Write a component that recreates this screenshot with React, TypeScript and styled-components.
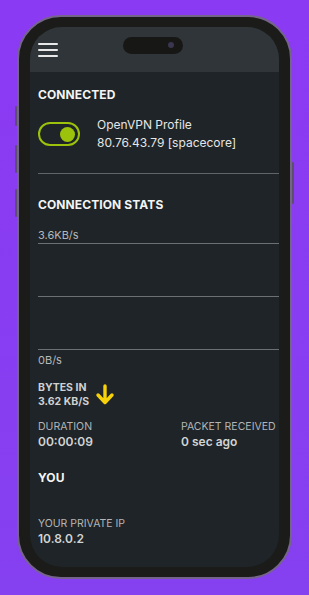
import React from 'react';
import styled, { createGlobalStyle } from 'styled-components';

const GlobalStyle = createGlobalStyle`
  html, body {
    margin: 0;
    padding: 0;
    background: #8a3cf2;
  }
  body {
    font-family: Inter, "Noto Sans", Arial, sans-serif;
    -webkit-font-smoothing: antialiased;
  }
`;

const Page = styled.div`
  width: 309px;
  height: 595px;
  display: flex;
  justify-content: center;
  align-items: flex-start;
  padding-top: 15px;
  box-sizing: border-box;
  background: linear-gradient(180deg, #8b3af3 0%, #8540f0 100%);
  overflow: hidden;
`;

const Phone = styled.div`
  position: relative;
  width: 275px;
  height: 564px;
  box-sizing: border-box;
  border: 2px solid #74648a;
  border-radius: 44px;
  background: #1b1b19;
  padding: 10px 11px;
`;

const SideButton = styled.div<{ $side: 'left' | 'right'; $top: number; $height: number }>`
  position: absolute;
  ${(p) => (p.$side === 'left' ? 'left: -4px;' : 'right: -4px;')}
  top: ${(p) => p.$top}px;
  width: 2px;
  height: ${(p) => p.$height}px;
  background: #5c4f6e;
  border-radius: 1px;
`;

const Screen = styled.div`
  position: relative;
  width: 100%;
  height: 100%;
  border-radius: 32px;
  overflow: hidden;
  background: #1e2427;
  display: flex;
  flex-direction: column;
`;

const Island = styled.div`
  position: absolute;
  top: 10px;
  left: 93px;
  width: 60px;
  height: 17px;
  border-radius: 9px;
  background: #171716;
  &::after {
    content: '';
    position: absolute;
    right: 9px;
    top: 5px;
    width: 6px;
    height: 6px;
    border-radius: 50%;
    background: #3b3550;
  }
`;

const Header = styled.div`
  height: 45px;
  flex-shrink: 0;
  background: #2f3538;
  display: flex;
  align-items: center;
  padding-left: 8px;
  padding-top: 1px;
  box-sizing: border-box;
`;

const Burger = styled.div`
  width: 20px;
  display: flex;
  flex-direction: column;
  gap: 4px;
  span {
    display: block;
    height: 2px;
    background: #e8e8e8;
    border-radius: 1px;
  }
`;

const Content = styled.div`
  flex: 1;
  padding-left: 8px;
  display: flex;
  flex-direction: column;
`;

const Heading = styled.div<{ $mt: number }>`
  margin-top: ${(p) => p.$mt}px;
  font-size: 12px;
  line-height: 15px;
  font-weight: 700;
  color: #f4f4f4;
  letter-spacing: 0.1px;
`;

const ProfileRow = styled.div`
  display: flex;
  align-items: center;
  gap: 17px;
  margin-top: 14px;
`;

const Toggle = styled.div`
  width: 42px;
  height: 24px;
  box-sizing: border-box;
  border: 2.5px solid #9cc20c;
  border-radius: 12px;
  display: flex;
  align-items: center;
  justify-content: flex-end;
  padding-right: 3px;
  flex-shrink: 0;
  &::after {
    content: '';
    width: 15px;
    height: 15px;
    border-radius: 50%;
    background: #9cc20c;
  }
`;

const ProfileText = styled.div`
  font-size: 12px;
  line-height: 18px;
  color: #e6e6e6;
`;

const Divider = styled.div<{ $mt: number }>`
  margin-top: ${(p) => p.$mt}px;
  height: 1px;
  background: #5f6466;
`;

const Axis = styled.div<{ $mt: number }>`
  margin-top: ${(p) => p.$mt}px;
  font-size: 11px;
  line-height: 12px;
  color: #b6b8b9;
`;

const Chart = styled.div`
  display: flex;
  flex-direction: column;
  gap: 52px;
  margin-top: 2px;
`;

const GridLine = styled.div`
  height: 1px;
  background: #6c7072;
`;

const BytesRow = styled.div`
  display: flex;
  align-items: center;
  gap: 6px;
  margin-top: 15px;
`;

const StrongLabel = styled.div`
  font-size: 10.5px;
  line-height: 13.5px;
  font-weight: 700;
  color: #d0d0d0;
`;

const Stats = styled.div`
  display: grid;
  grid-template-columns: 143px 1fr;
  margin-top: 12px;
`;

const Label = styled.div`
  font-size: 10.5px;
  line-height: 14px;
  color: #b3b5b6;
  white-space: nowrap;
`;

const Value = styled.div`
  font-size: 12px;
  line-height: 15px;
  font-weight: 600;
  color: #d2d3d3;
  white-space: nowrap;
`;

const Block = styled.div<{ $mt?: number }>`
  margin-top: ${(p) => p.$mt ?? 0}px;
`;

const ArrowDown = () => (
  <svg width="20" height="22" viewBox="0 0 20 22">
    <path d="M10 2 V18 M3 11 L10 18.5 L17 11" fill="none" stroke="#f7d20a" strokeWidth="3.4" strokeLinecap="round" strokeLinejoin="round" />
  </svg>
);

export default function App() {
  return (
    <>
      <GlobalStyle />
      <Page>
        <Phone>
          <SideButton $side="left" $top={89} $height={20} />
          <SideButton $side="left" $top={128} $height={28} />
          <SideButton $side="left" $top={172} $height={28} />
          <SideButton $side="right" $top={145} $height={42} />
          <Screen>
            <Header>
              <Burger>
                <span />
                <span />
                <span />
              </Burger>
            </Header>
            <Island />
            <Content>
              <Heading $mt={15}>CONNECTED</Heading>
              <ProfileRow>
                <Toggle />
                <ProfileText>
                  OpenVPN Profile
                  <br />
                  80.76.43.79 [spacecore]
                </ProfileText>
              </ProfileRow>
              <Divider $mt={21} />
              <Heading $mt={23}>CONNECTION STATS</Heading>
              <Axis $mt={17}>3.6KB/s</Axis>
              <Chart>
                <GridLine />
                <GridLine />
                <GridLine />
              </Chart>
              <Axis $mt={4}>0B/s</Axis>
              <BytesRow>
                <StrongLabel>
                  BYTES IN
                  <br />
                  3.62 KB/S
                </StrongLabel>
                <ArrowDown />
              </BytesRow>
              <Stats>
                <div>
                  <Label>DURATION</Label>
                  <Value>00:00:09</Value>
                </div>
                <div>
                  <Label>PACKET RECEIVED</Label>
                  <Value>0 sec ago</Value>
                </div>
              </Stats>
              <Heading $mt={21}>YOU</Heading>
              <Block $mt={32}>
                <Label>YOUR PRIVATE IP</Label>
                <Value>10.8.0.2</Value>
              </Block>
            </Content>
          </Screen>
        </Phone>
      </Page>
    </>
  );
}
